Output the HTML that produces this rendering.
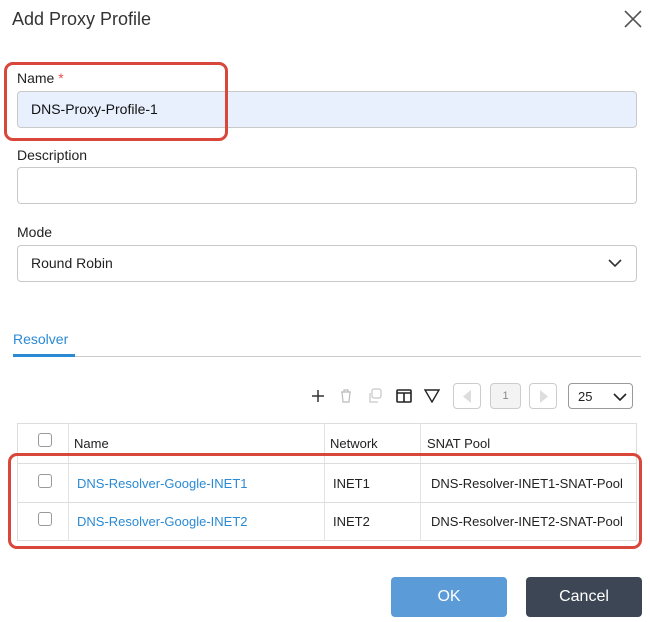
<!DOCTYPE html>
<html><head><style>
*{box-sizing:border-box;margin:0;padding:0}
body{width:650px;height:622px;background:#fff;font-family:"Liberation Sans",sans-serif;color:#222;position:relative;overflow:hidden}
.a{position:absolute}
.lbl{font-size:14px;color:#222}
.inp{position:absolute;left:17px;width:620px;height:37px;border:1px solid #c9c9c9;border-radius:4px;background:#fff;font-size:14px;padding:9px 13px}
.cb{position:absolute;width:14px;height:14px;border:1px solid #999;border-radius:3px;background:#fff}
.pg{position:absolute;top:383px;height:26px;border:1px solid #ccc;border-radius:4px;background:#fff}
.cell{position:absolute;font-size:13px}
</style></head><body>
<div class="a" style="left:12px;top:9px;font-size:18px;color:#333">Add Proxy Profile</div>
<svg class="a" style="left:624px;top:10px" width="18" height="18"><path d="M1 1L17 17M17 1L1 17" stroke="#555" stroke-width="1.6"/></svg>

<div class="a lbl" style="left:17px;top:70px">Name <span style="color:#e0524a">*</span></div>
<div class="inp" style="top:91px;background:#e8f0fe;color:#111">DNS-Proxy-Profile-1</div>
<div class="a" style="left:4px;top:62px;width:224px;height:79px;border:3px solid #d9463a;border-radius:9px"></div>

<div class="a lbl" style="left:17px;top:147px">Description</div>
<div class="inp" style="top:167px"></div>

<div class="a lbl" style="left:17px;top:224px">Mode</div>
<div class="inp" style="top:245px;color:#222">Round Robin</div>
<svg class="a" style="left:608px;top:259px" width="14" height="9"><path d="M1 1L7 7L13 1" stroke="#333" stroke-width="1.6" fill="none"/></svg>

<div class="a" style="left:13px;top:331px;font-size:14px;color:#2a8ad4">Resolver</div>
<div class="a" style="left:13px;top:356px;width:628px;height:1px;background:#ccc"></div>
<div class="a" style="left:13px;top:354px;width:62px;height:3px;background:#2a8ad4"></div>

<svg class="a" style="left:310px;top:388px" width="16" height="16"><path d="M8 2V14M2 8H14" stroke="#333" stroke-width="1.5"/></svg>
<svg class="a" style="left:339px;top:388px" width="14" height="16"><path d="M2 4H12M5 4V2H9V4M3 4L4 14H10L11 4" stroke="#bbb" fill="none" stroke-width="1.2"/></svg>
<svg class="a" style="left:367px;top:388px" width="16" height="16"><rect x="5" y="1" width="9" height="9" rx="2" stroke="#bbb" fill="none"/><path d="M3 5V14H11" stroke="#bbb" fill="none"/></svg>
<svg class="a" style="left:396px;top:389px" width="16" height="14"><rect x="1" y="1" width="14" height="12" rx="1" stroke="#222" stroke-width="1.6" fill="none"/><path d="M1 4H15M8 4V13" stroke="#222" stroke-width="1.6"/></svg>
<svg class="a" style="left:424px;top:389px" width="16" height="14"><path d="M1 1H15L8 13Z" stroke="#222" stroke-width="1.4" fill="none"/></svg>
<div class="pg" style="left:453px;width:28px"><svg style="position:absolute;left:8px;top:6px" width="10" height="13"><path d="M9 0V13L1 6.5Z" fill="#ddd"/></svg></div>
<div class="pg" style="left:490px;width:31px;background:#f3f3f3;font-size:11px;color:#888;text-align:center;line-height:24px">1</div>
<div class="pg" style="left:529px;width:28px"><svg style="position:absolute;left:9px;top:6px" width="10" height="13"><path d="M1 0V13L9 6.5Z" fill="#ddd"/></svg></div>
<div class="pg" style="left:568px;width:65px;border-color:#999;font-size:13px;padding:5px 0 0 9px">25<svg style="position:absolute;left:44px;top:9px" width="14" height="9"><path d="M1 1L7 7L13 1" stroke="#222" stroke-width="1.6" fill="none"/></svg></div>

<div class="a" style="left:17px;top:423px;width:620px;height:118px;border:1px solid #ddd"></div>
<div class="a" style="left:68px;top:423px;width:1px;height:118px;background:#e3e3e3"></div>
<div class="a" style="left:324px;top:423px;width:1px;height:118px;background:#e3e3e3"></div>
<div class="a" style="left:420px;top:423px;width:1px;height:118px;background:#e3e3e3"></div>
<div class="a" style="left:17px;top:463px;width:620px;height:1px;background:#ddd"></div>
<div class="a" style="left:17px;top:502px;width:620px;height:1px;background:#ddd"></div>
<div class="cb" style="left:38px;top:433px"></div>
<div class="cell" style="left:74px;top:436px">Name</div>
<div class="cell" style="left:330px;top:436px">Network</div>
<div class="cell" style="left:427px;top:436px">SNAT Pool</div>
<div class="cb" style="left:38px;top:474px"></div>
<div class="cell" style="left:77px;top:476px;color:#2a8ad4">DNS-Resolver-Google-INET1</div>
<div class="cell" style="left:333px;top:476px">INET1</div>
<div class="cell" style="left:431px;top:476px">DNS-Resolver-INET1-SNAT-Pool</div>
<div class="cb" style="left:38px;top:512px"></div>
<div class="cell" style="left:77px;top:514px;color:#2a8ad4">DNS-Resolver-Google-INET2</div>
<div class="cell" style="left:333px;top:514px">INET2</div>
<div class="cell" style="left:431px;top:514px">DNS-Resolver-INET2-SNAT-Pool</div>
<div class="a" style="left:8px;top:453px;width:634px;height:96px;border:3px solid #d9463a;border-radius:9px"></div>

<div class="a" style="left:391px;top:577px;width:116px;height:40px;background:#5b9bd8;border-radius:4px;color:#fff;font-size:16px;text-align:center;line-height:40px">OK</div>
<div class="a" style="left:526px;top:577px;width:116px;height:40px;background:#3c4654;border-radius:4px;color:#fff;font-size:16px;text-align:center;line-height:40px">Cancel</div>
</body></html>
